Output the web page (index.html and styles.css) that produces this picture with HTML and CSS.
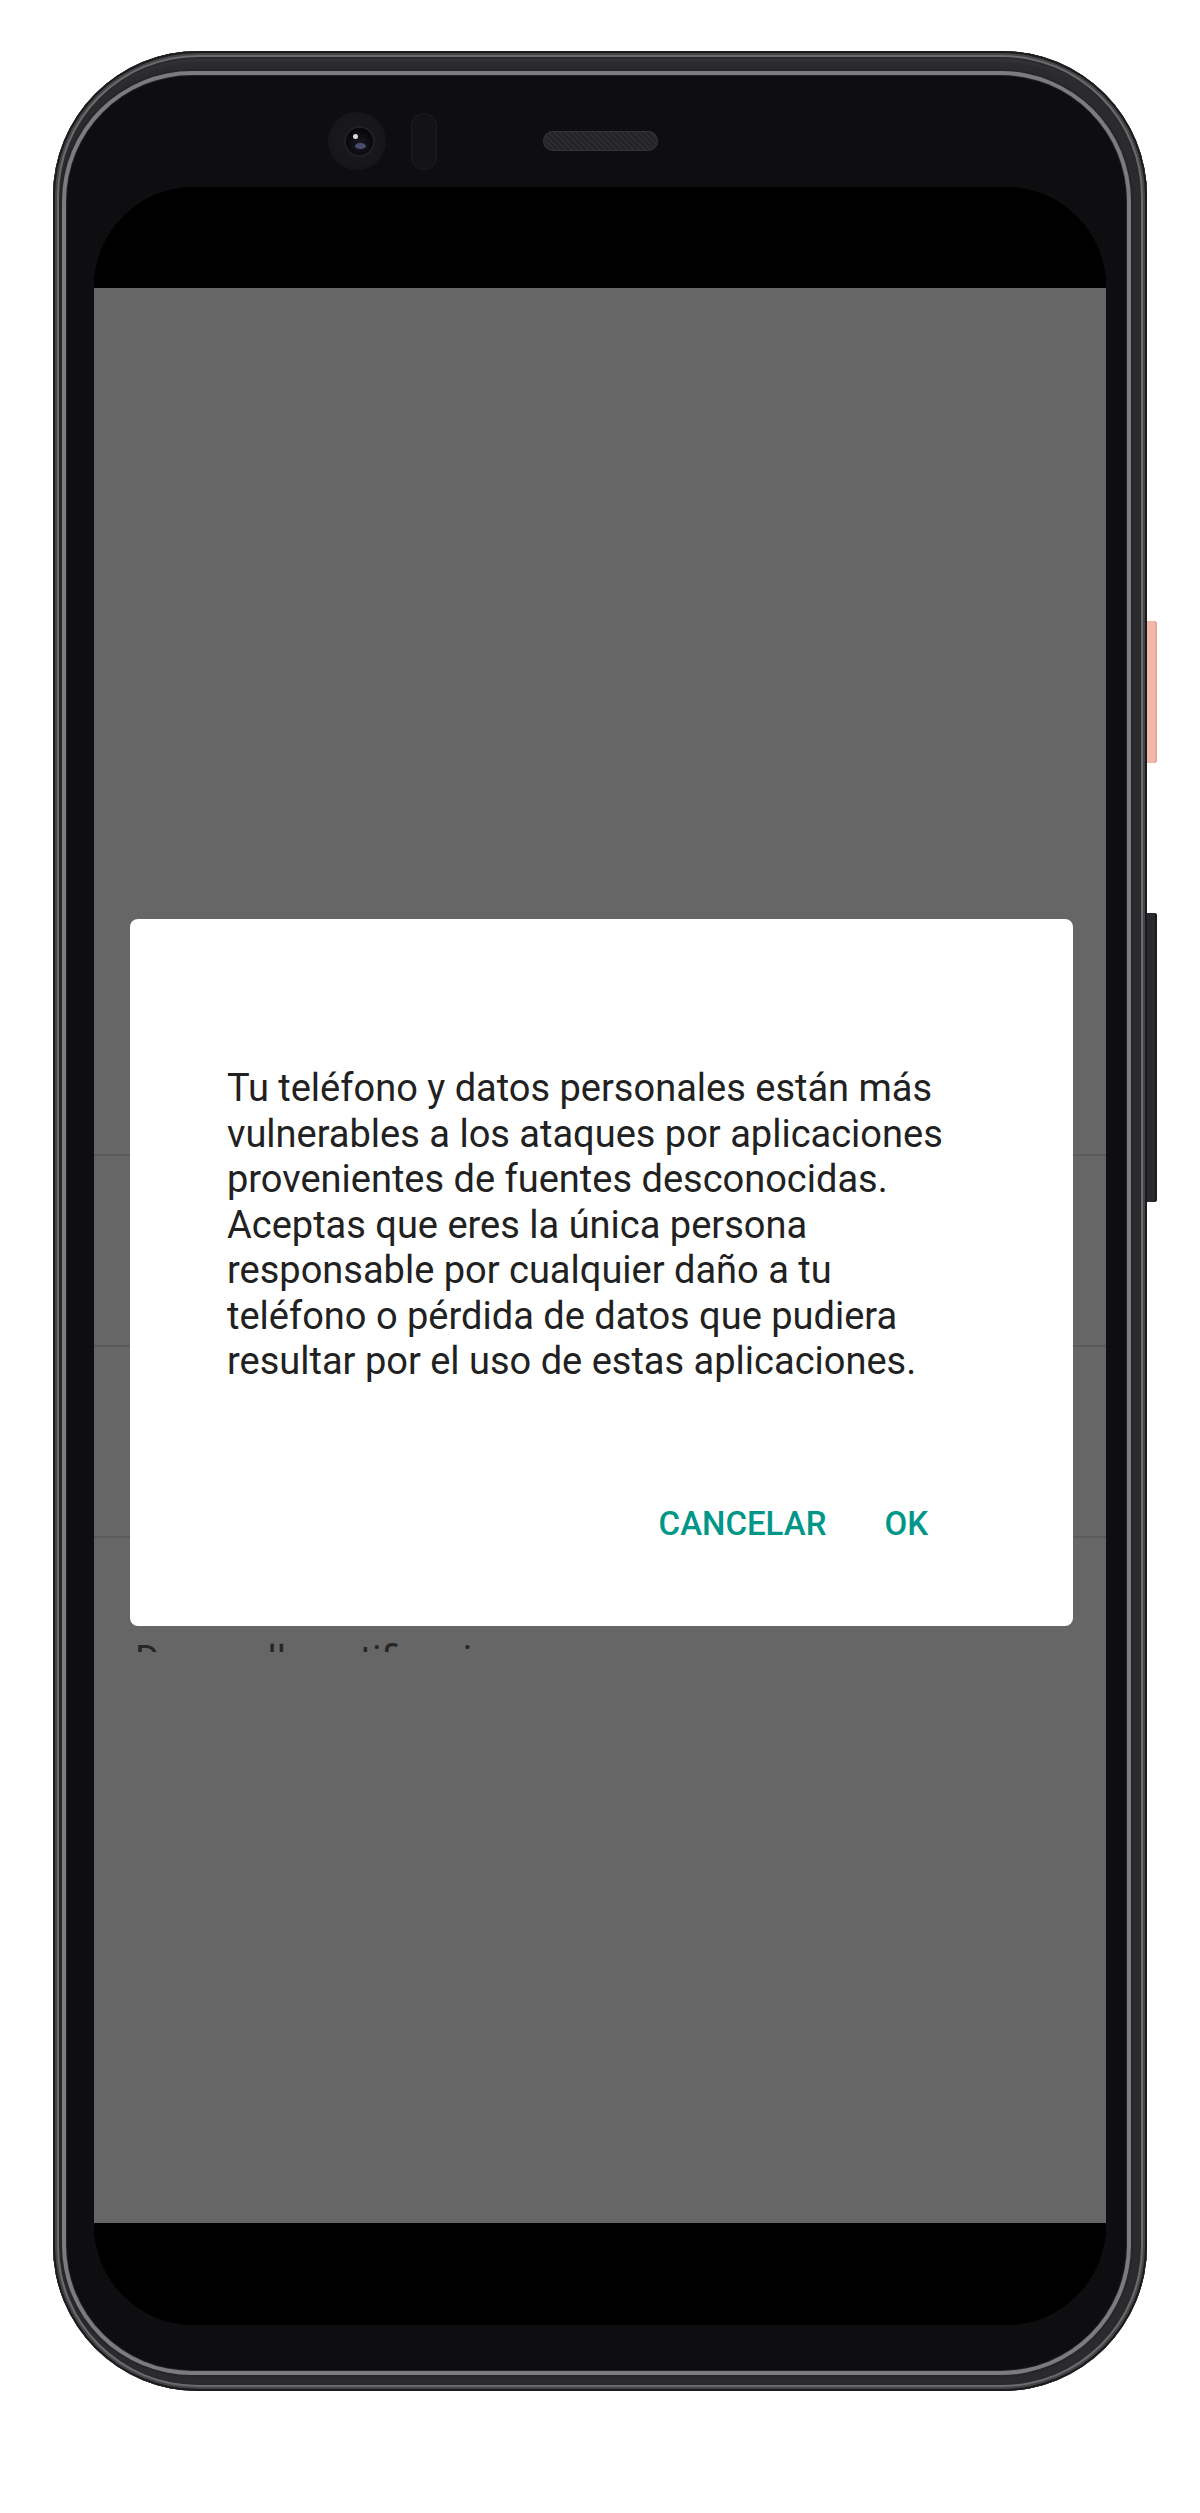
FILE: index.html
```html
<!DOCTYPE html>
<html lang="es">
<head>
    <meta charset="UTF-8">
    <meta name="viewport" content="width=device-width, initial-scale=1.0">
    <title>Fuentes desconocidas</title>
    <link rel="stylesheet" href="styles.css">
</head>
<body>
    <div class="phone">
        <span class="key key-power"></span>
        <span class="key key-volume"></span>

        <div class="bezel">
            <div class="sensors">
                <span class="camera">
                    <span class="lens"></span>
                </span>
                <span class="proximity"></span>
                <span class="speaker"></span>
            </div>

            <div class="screen">
                <div class="status-bar"></div>

                <div class="content">
                    <div class="settings">
                        <div class="setting-row"></div>
                        <div class="setting-row"></div>
                        <div class="setting-row"></div>
                        <div class="peek">Desarrollo notificaciones</div>
                    </div>

                    <div class="dialog">
                        <p class="dialog-message">
                            Tu teléfono y datos personales están más<br>
                            vulnerables a los ataques por aplicaciones<br>
                            provenientes de fuentes desconocidas.<br>
                            Aceptas que eres la única persona<br>
                            responsable por cualquier daño a tu<br>
                            teléfono o pérdida de datos que pudiera<br>
                            resultar por el uso de estas aplicaciones.
                        </p>
                        <div class="dialog-actions">
                            <button class="dialog-button">CANCELAR</button>
                            <button class="dialog-button">OK</button>
                        </div>
                    </div>
                </div>

                <div class="nav-bar"></div>
            </div>
        </div>
    </div>
</body>
</html>
```

FILE: styles.css
```css
* {
    box-sizing: border-box;
}

body {
    margin: 0;
    background: #ffffff;
    font-family: Roboto, "Noto Sans", Arial, sans-serif;
}

/* Device frame */

.phone {
    position: relative;
    width: 1094px;
    height: 2340px;
    margin: 51px 0 0 53px;
    padding: 25px 21px 21px 14px;
    border-radius: 145px;
    background: #2b2b2d;
    box-shadow:
        inset 0 0 0 2px #1b1b1d,
        inset 0 0 0 4px #444447,
        inset 0 0 0 6px #6a6a6d,
        inset 0 0 0 8px #2a2a2c,
        inset 0 16px 6px -8px rgba(255, 255, 255, 0.1);
}

.key {
    position: absolute;
    left: 1094px;
    width: 10px;
    border-radius: 0 3px 3px 0;
}

.key-power {
    top: 570px;
    height: 142px;
    background: #f2b9aa;
    box-shadow: inset -2px 0 0 #e6a898;
}

.key-volume {
    top: 862px;
    height: 289px;
    background: #2a2a2c;
    box-shadow: inset -2px 0 0 #1c1c1e;
}

.bezel {
    display: flex;
    flex-direction: column;
    height: 100%;
    padding: 36px 20px 45px 27px;
    border-radius: 125px;
    background: #0e0e10;
    box-shadow:
        0 0 0 1px #222225,
        0 0 0 5px #7c7c80,
        0 0 0 7px #262628;
}

.sensors {
    display: flex;
    align-items: center;
    height: 58px;
    padding-left: 234px;
}

.camera {
    display: flex;
    align-items: center;
    justify-content: center;
    width: 58px;
    height: 58px;
    border-radius: 50%;
    background: radial-gradient(circle, #18181b 55%, #121214 100%);
}

.lens {
    position: relative;
    width: 27px;
    height: 27px;
    margin: 1px 0 0 4px;
    border-radius: 50%;
    background: radial-gradient(circle at 50% 60%, #1a1a24 0%, #060608 70%);
    box-shadow: 0 0 0 2px #202026;
}

.lens::before {
    content: "";
    position: absolute;
    left: 7px;
    top: 6px;
    width: 5px;
    height: 5px;
    border-radius: 50%;
    background: #d8d8dc;
}

.lens::after {
    content: "";
    position: absolute;
    left: 9px;
    top: 15px;
    width: 11px;
    height: 6px;
    border-radius: 50%;
    background: #4b4b6e;
}

.proximity {
    width: 26px;
    height: 57px;
    margin-left: 25px;
    border-radius: 13px;
    background: #131316;
    box-shadow: inset 0 0 0 1px #1d1d21;
}

.speaker {
    width: 115px;
    height: 20px;
    margin-left: 106px;
    border-radius: 10px;
    background:
        repeating-linear-gradient(45deg, #2c2c2f 0 2px, #232326 2px 4px);
    box-shadow: inset 0 0 0 1px #333337;
}

/* Display */

.screen {
    display: flex;
    flex-direction: column;
    flex: 1;
    margin-top: 17px;
    border-radius: 100px;
    background: #000000;
    overflow: hidden;
}

.status-bar {
    height: 101px;
    background: #000000;
}

.nav-bar {
    height: 102px;
    background: #000000;
}

.content {
    position: relative;
    flex: 1;
    background: #666666;
}

/* Settings list dimmed behind the dialog */

.settings {
    padding-top: 677px;
}

.setting-row {
    height: 191px;
    border-bottom: 2px solid #5a5a5a;
}

.peek {
    height: 9px;
    margin-top: 105px;
    padding-left: 41px;
    overflow: hidden;
    font-size: 38px;
    line-height: 35px;
    color: #262626;
    white-space: nowrap;
}

/* Alert dialog */

.dialog {
    position: absolute;
    top: 631px;
    left: 36px;
    width: 943px;
    height: 707px;
    padding: 147px 120px 0 97px;
    border-radius: 8px;
    background: #ffffff;
}

.dialog-message {
    margin: 0;
    font-size: 38px;
    line-height: 45.5px;
    color: #212121;
}

.dialog-actions {
    display: flex;
    justify-content: flex-end;
    gap: 58px;
    margin-top: 119px;
    padding-right: 25px;
}

.dialog-button {
    padding: 0;
    border: none;
    background: none;
    font-family: Roboto, "Noto Sans", Arial, sans-serif;
    font-size: 33px;
    font-weight: 500;
    color: #009688;
}
```
